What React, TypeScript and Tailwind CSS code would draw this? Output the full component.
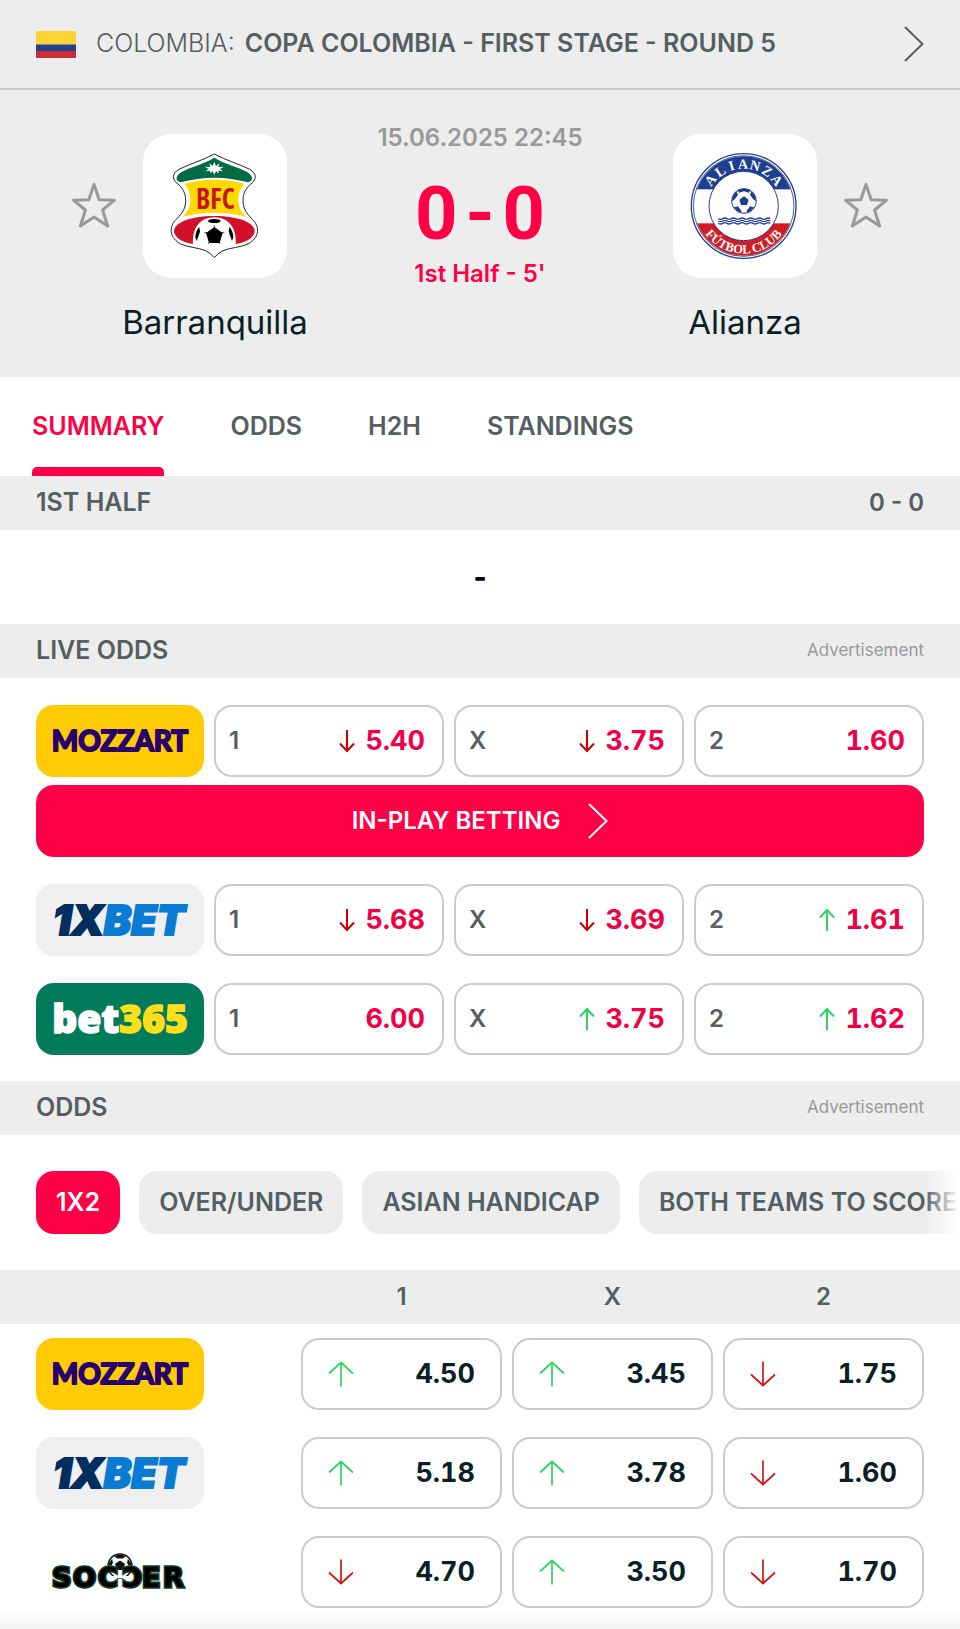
import type { ReactNode } from "react";

type Trend = "up" | "down" | null;
type Brand = "mozzart" | "onexbet" | "bet365" | "soccer";
type Odd = { value: string; trend: Trend };

const OUTCOMES = ["1", "X", "2"];

const LIVE_ODDS: { brand: Brand; odds: Odd[]; promoted?: boolean }[] = [
  {
    brand: "mozzart",
    promoted: true,
    odds: [
      { value: "5.40", trend: "down" },
      { value: "3.75", trend: "down" },
      { value: "1.60", trend: null },
    ],
  },
  {
    brand: "onexbet",
    odds: [
      { value: "5.68", trend: "down" },
      { value: "3.69", trend: "down" },
      { value: "1.61", trend: "up" },
    ],
  },
  {
    brand: "bet365",
    odds: [
      { value: "6.00", trend: null },
      { value: "3.75", trend: "up" },
      { value: "1.62", trend: "up" },
    ],
  },
];

const PREMATCH_ODDS: { brand: Brand; odds: Odd[] }[] = [
  {
    brand: "mozzart",
    odds: [
      { value: "4.50", trend: "up" },
      { value: "3.45", trend: "up" },
      { value: "1.75", trend: "down" },
    ],
  },
  {
    brand: "onexbet",
    odds: [
      { value: "5.18", trend: "up" },
      { value: "3.78", trend: "up" },
      { value: "1.60", trend: "down" },
    ],
  },
  {
    brand: "soccer",
    odds: [
      { value: "4.70", trend: "down" },
      { value: "3.50", trend: "up" },
      { value: "1.70", trend: "down" },
    ],
  },
];

function Chevron() {
  return (
    <svg className="h-[36px] w-[20px] shrink-0" viewBox="0 0 20 36" fill="none" stroke="currentColor" strokeWidth="2" aria-hidden="true">
      <path d="M1 1 L18.5 18 L1 35" />
    </svg>
  );
}

function Star() {
  return (
    <svg className="h-[46px] w-[46px]" viewBox="0 0 46 46" fill="none" stroke="#999999" strokeWidth="3" strokeLinejoin="round" aria-hidden="true">
      <path d="M23 2.5 L28.2 17.8 L43.5 18.2 L31.6 28 L36.6 44 L23 35 L9.4 44 L14.4 28 L2.5 18.2 L17.8 17.8 Z" />
    </svg>
  );
}

function SmallArrow({ trend }: { trend: Trend }) {
  if (!trend) return null;
  return (
    <svg className="h-[24px] w-[16px] shrink-0" viewBox="0 0 16 24" fill="none" stroke={trend === "up" ? "#2fd35f" : "#c80000"} strokeWidth="2" role="img" aria-label={trend}>
      <path d={trend === "up" ? "M8 23 V2 M1 9.5 L8 2 L15 9.5" : "M8 1 V22 M1 14.5 L8 22 L15 14.5"} />
    </svg>
  );
}

function WideArrow({ trend }: { trend: Trend }) {
  if (!trend) return null;
  return (
    <svg className="h-[28px] w-[26px] shrink-0" viewBox="0 0 26 28" fill="none" stroke={trend === "up" ? "#2fd35f" : "#d01818"} strokeWidth="1.7" role="img" aria-label={trend}>
      <path d={trend === "up" ? "M13 26.5 V2.5 M1 13.5 L13 2.5 L25 13.5" : "M13 1.5 V25.5 M1 14.5 L13 25.5 L25 14.5"} />
    </svg>
  );
}

function BarranquillaCrest() {
  return (
    <svg className="h-full w-full" viewBox="12 12 432 432" role="img" aria-label="Barranquilla crest">
      <path
        d="M226 72 C190 92 150 102 120 118 C98 130 98 150 118 163 C135 178 140 195 140 212 C140 240 125 255 108 272 C88 295 94 325 125 342 C150 353 175 352 200 362 Q216 370 226 383 Q236 370 252 362 C277 352 302 353 327 342 C358 325 364 295 344 272 C327 255 312 240 312 212 C312 195 317 178 334 163 C354 150 354 130 332 118 C302 102 262 92 226 72 Z"
        fill="#fff"
        stroke="#222"
        strokeWidth="3"
      />
      <path d="M226 83 C195 103 155 110 128 126 C109 138 108 152 124 157 Q175 143 226 143 Q277 143 328 157 C344 152 343 138 324 126 C297 110 257 103 226 83 Z" fill="#006b45" />
      <path d="M226 95 L231 108 L241 100 L238 111 L255 110 L243 117 L252 124 L238 122 L239 130 L231 124 L226 134 L221 124 L213 130 L214 122 L200 124 L209 117 L197 110 L214 111 L211 100 L221 108 Z" fill="#fff" />
      <path d="M136 161 Q226 138 316 161 C300 178 298 200 298 212 C299 235 308 245 320 260 Q226 236 132 260 C144 245 153 235 154 212 C154 200 152 178 136 161 Z" fill="#ffd900" />
      <text x="229" y="238" textAnchor="middle" fill="#c8141e" className="font-['Open_Sans_Condensed','Roboto_Condensed','Liberation_Sans_Narrow','Noto_Sans',sans-serif] text-[84px] font-bold">BFC</text>
      <path d="M165 343 C122 336 105 318 105 303 C105 280 150 258 226 258 C302 258 347 280 347 303 C347 318 330 336 287 343 Z" fill="#d2102a" />
      <path d="M162 346 C158 295 182 262 226 262 C270 262 294 295 290 346 Z" fill="#fff" />
      <ellipse cx="226" cy="273" rx="19" ry="6" />
      <path d="M226 291 L251 309 L242 339 L210 339 L201 309 Z M181 291 L183 305 L173 333 L169 322 Q170 301 181 291 Z M271 291 L269 305 L279 333 L283 322 Q282 301 271 291 Z" />
      <path d="M196 308 H256 M226 286 V294 M208 342 L212 335 M244 342 L240 335" stroke="#000" strokeWidth="2" />
    </svg>
  );
}

const ALIANZA_LETTERS = [
  { char: "A", angle: -52 },
  { char: "L", angle: -34 },
  { char: "I", angle: -17 },
  { char: "A", angle: -1 },
  { char: "N", angle: 16 },
  { char: "Z", angle: 34 },
  { char: "A", angle: 52 },
];

function AlianzaCrest() {
  return (
    <svg className="h-full w-full" viewBox="12 12 432 432" role="img" aria-label="Alianza crest">
      <defs>
        <clipPath id="alianza-ring">
          <circle cx="224" cy="228" r="149" />
        </clipPath>
        <path id="alianza-bottom" d="M81 228 A143 143 0 0 0 367 228" />
      </defs>
      <circle cx="224" cy="228" r="157" fill="#fff" stroke="#263f8c" strokeWidth="4" />
      <g clipPath="url(#alianza-ring)">
        <rect x="64" y="68" width="320" height="110" fill="#203e8f" />
        <rect x="64" y="280" width="320" height="110" fill="#d31d25" />
      </g>
      <circle cx="224" cy="228" r="151" fill="none" stroke="#263f8c" strokeWidth="2.5" />
      <circle cx="224" cy="228" r="104" fill="#fff" stroke="#263f8c" strokeWidth="3" />
      <g fill="#fff" textAnchor="middle" className="font-['Liberation_Serif',serif] text-[42px] font-bold">
        {ALIANZA_LETTERS.map(({ char, angle }) => (
          <text key={angle} x="224" y="116" transform={`rotate(${angle} 224 228)`}>
            {char}
          </text>
        ))}
      </g>
      <text fill="#fff" textAnchor="middle" className="font-['Liberation_Serif',serif] text-[38px] font-bold">
        <textPath href="#alianza-bottom" startOffset="50%">FÚTBOL CLUB</textPath>
      </text>
      <circle cx="225" cy="213" r="37" fill="#fff" stroke="#203e8f" strokeWidth="3" />
      <g fill="#203e8f">
        <path d="M225 199 L239 209 L234 225 L216 225 L211 209 Z" />
        <path d="M206 180 Q225 171 244 180 L240 188 L225 184 L210 188 Z" />
        <path d="M190 204 Q192 192 202 183 L207 194 L198 207 L190 214 Z" />
        <path d="M260 204 Q258 192 248 183 L243 194 L252 207 L260 214 Z" />
        <path d="M195 232 L207 229 L217 242 L215 248 Q202 244 195 232 Z" />
        <path d="M255 232 L243 229 L233 242 L235 248 Q248 244 255 232 Z" />
      </g>
      <path
        d="M148 266 q6.5 4 13 0 t13 0 t13 0 t13 0 t13 0 t13 0 t13 0 t13 0 t13 0 t13 0 t13 0 t13 0 M148 273 q6.5 4 13 0 t13 0 t13 0 t13 0 t13 0 t13 0 t13 0 t13 0 t13 0 t13 0 t13 0 t13 0 M148 280 q6.5 4 13 0 t13 0 t13 0 t13 0 t13 0 t13 0 t13 0 t13 0 t13 0 t13 0 t13 0 t13 0"
        fill="none"
        stroke="#263f8c"
        strokeWidth="4"
      />
    </svg>
  );
}

const BRANDS: Record<Brand, { name: string; tile: string; art: ReactNode }> = {
  mozzart: {
    name: "Mozzart",
    tile: "bg-[#ffcb05]",
    art: (
      <text x="84" y="46" textAnchor="middle" fill="#28006e" stroke="#28006e" strokeWidth="2" strokeLinejoin="round" className="font-['Lato',sans-serif] text-[28px] font-bold">
        MOZZART
      </text>
    ),
  },
  onexbet: {
    name: "1xBet",
    tile: "bg-[#efefef]",
    art: (
      <text x="83" y="51" textAnchor="middle" strokeWidth="2" className="font-['Inter',sans-serif] text-[41px] font-black italic">
        <tspan fill="#002f5f" stroke="#002f5f">1X</tspan>
        <tspan fill="#0a7bd2" stroke="#0a7bd2">BET</tspan>
      </text>
    ),
  },
  bet365: {
    name: "bet365",
    tile: "bg-[#027b5b]",
    art: (
      <text x="84" y="50" textAnchor="middle" strokeWidth="1.5" className="font-['Noto_Sans','Open_Sans',sans-serif] text-[39px] font-black">
        <tspan fill="#ffffff" stroke="#ffffff">bet</tspan>
        <tspan fill="#ffdf1b" stroke="#ffdf1b">365</tspan>
      </text>
    ),
  },
  soccer: {
    name: "Soccer",
    tile: "bg-white",
    art: (
      <>
        <circle cx="84" cy="30" r="12" fill="#fff" stroke="#111" strokeWidth="1.5" />
        <path d="M84 24.5 L89 28 L87 34 L81 34 L79 28 Z M78 20 L84 18.5 L90 20 L87 22.5 L81 22.5 Z M73 27 L76 23 L77 27 L73.5 32 Z M95 27 L92 23 L91 27 L94.5 32 Z" fill="#111" />
        <g fill="#000" stroke="#143825" strokeWidth="3.5" paintOrder="stroke" className="font-['DejaVu_Sans',sans-serif] text-[27px] font-bold">
          <text x="16" y="51">S</text>
          <text x="37" y="51">O</text>
          <text x="62" y="51">C</text>
          <text x="-106" y="-31" transform="rotate(180)">C</text>
          <text x="106" y="51">E</text>
          <text x="127" y="51">R</text>
        </g>
        <path d="M75 41 H93" stroke="#fff" strokeWidth="2" />
      </>
    ),
  },
};

function BrandLink({ brand }: { brand: Brand }) {
  const { name, tile, art } = BRANDS[brand];
  return (
    <a href={`#${brand}`} aria-label={name} className={`block h-[72px] w-[168px] shrink-0 overflow-hidden rounded-[18px] ${tile}`}>
      <svg className="h-full w-full" viewBox="0 0 168 72" aria-hidden="true">
        {art}
      </svg>
    </a>
  );
}

function SectionBar({ title, children }: { title: string; children?: ReactNode }) {
  return (
    <div className="flex h-[54px] items-center justify-between bg-[#ededed] px-9">
      <h2 className="text-[25px] font-semibold">{title}</h2>
      {children}
    </div>
  );
}

function Team({ name, crest, away }: { name: string; crest: ReactNode; away?: boolean }) {
  return (
    <div className={`flex items-start gap-[26px] ${away ? "flex-row-reverse" : ""}`}>
      <button type="button" aria-label={`Follow ${name}`} className="mt-12">
        <Star />
      </button>
      <div className="flex w-[144px] flex-col items-center">
        <div className="h-[144px] w-[144px] overflow-hidden rounded-[28px] bg-white">{crest}</div>
        <a href={`#${name.toLowerCase()}`} className="mt-6 text-[33px] leading-10 whitespace-nowrap text-[#0b1f26]">
          {name}
        </a>
      </div>
    </div>
  );
}

export default function App() {
  return (
    <div className="relative min-h-screen overflow-hidden bg-white font-['Inter',sans-serif] text-[#555e61]">
      <a href="#tournament" className="flex h-[90px] items-center border-b-2 border-[#cccccc] bg-[#ededed] px-9">
        <svg className="h-[27px] w-[40px]" viewBox="0 0 40 27" role="img" aria-label="Colombia">
          <rect width="40" height="27" fill="#cc2f35" />
          <rect width="40" height="20" fill="#233f91" />
          <rect width="40" height="13.5" fill="#fcd535" />
        </svg>
        <span className="ml-5 text-[25px] font-light">COLOMBIA:</span>
        <span className="ml-[10px] text-[25px] font-semibold">COPA COLOMBIA - FIRST STAGE - ROUND 5</span>
        <span className="ml-auto">
          <Chevron />
        </span>
      </a>

      <header className="flex items-start justify-between bg-[#ededed] px-[71px] pt-11 pb-[35px]">
        <Team name="Barranquilla" crest={<BarranquillaCrest />} />
        <div className="flex flex-col items-center text-2xl font-semibold">
          <time className="-mt-3 leading-8 text-[#999999]">15.06.2025 22:45</time>
          <div className="mt-4 flex items-center gap-2 font-['Roboto',sans-serif] text-[74px] leading-[88px] font-bold text-[#ff0046]">
            <span>0</span>
            <span>-</span>
            <span>0</span>
          </div>
          <p className="leading-8 text-[#ff0046]">1st Half - 5'</p>
        </div>
        <Team name="Alianza" crest={<AlianzaCrest />} away />
      </header>

      <nav className="flex h-[99px] gap-[66px] px-8 text-[25px] font-semibold">
        <a href="#summary" aria-current="page" className="flex flex-col text-[#ff0046]">
          <span className="flex flex-1 items-center pt-[10px]">SUMMARY</span>
          <span className="h-[9px] rounded-t-[5px] bg-[#ff0046]" />
        </a>
        <a href="#odds" className="flex items-center">ODDS</a>
        <a href="#h2h" className="flex items-center">H2H</a>
        <a href="#standings" className="flex items-center">STANDINGS</a>
      </nav>

      <SectionBar title="1ST HALF">
        <span className="text-2xl font-semibold">0 - 0</span>
      </SectionBar>
      <p className="flex h-[94px] items-center justify-center text-[28px] font-extrabold text-black">-</p>

      <SectionBar title="LIVE ODDS">
        <span className="text-[17px] text-[#999999]">Advertisement</span>
      </SectionBar>
      <div className="flex flex-col gap-[27px] px-9 pt-[27px] pb-[26px]">
        {LIVE_ODDS.map(({ brand, odds, promoted }) => (
          <div key={brand} className="flex flex-col gap-2">
            <div className="flex gap-[10px]">
              <BrandLink brand={brand} />
              {odds.map(({ value, trend }, i) => (
                <button key={OUTCOMES[i]} type="button" className="flex h-[72px] flex-1 items-center rounded-[18px] border-2 border-[#cacccc] pr-[17px] pl-[13px]">
                  <span className="mr-auto text-2xl font-semibold">{OUTCOMES[i]}</span>
                  <SmallArrow trend={trend} />
                  <span className="ml-[10px] text-[27px] font-bold text-[#f00046] tabular-nums">{value}</span>
                </button>
              ))}
            </div>
            {promoted && (
              <button type="button" className="flex h-[72px] items-center justify-center gap-7 rounded-[18px] bg-[#ff0046] text-2xl font-semibold text-white">
                IN-PLAY BETTING
                <Chevron />
              </button>
            )}
          </div>
        ))}
      </div>

      <SectionBar title="ODDS">
        <span className="text-[17px] text-[#999999]">Advertisement</span>
      </SectionBar>
      <div className="relative">
        <div className="flex gap-[19px] overflow-hidden py-9 pl-9 text-[25px] font-semibold whitespace-nowrap">
          <button type="button" className="h-[63px] shrink-0 rounded-[18px] bg-[#ff0046] px-5 text-white">1X2</button>
          <button type="button" className="h-[63px] shrink-0 rounded-[18px] bg-[#ededed] px-5">OVER/UNDER</button>
          <button type="button" className="h-[63px] shrink-0 rounded-[18px] bg-[#ededed] px-5">ASIAN HANDICAP</button>
          <button type="button" className="h-[63px] shrink-0 rounded-[18px] bg-[#ededed] px-5">BOTH TEAMS TO SCORE</button>
        </div>
        <div className="pointer-events-none absolute inset-y-0 right-0 w-9 bg-linear-to-r from-white/0 to-white" />
      </div>

      <table className="block">
        <thead className="block bg-[#ededed]">
          <tr className="grid h-[54px] grid-cols-[255px_1fr_1fr_1fr] items-center gap-x-[10px] px-9 text-2xl font-semibold">
            <td />
            {OUTCOMES.map((o) => (
              <th key={o} scope="col" className="font-semibold">{o}</th>
            ))}
          </tr>
        </thead>
        <tbody className="flex flex-col gap-[27px] px-9 pt-[14px] pb-[22px]">
          {PREMATCH_ODDS.map(({ brand, odds }) => (
            <tr key={brand} className="grid grid-cols-[255px_1fr_1fr_1fr] gap-x-[10px]">
              <th scope="row">
                <BrandLink brand={brand} />
              </th>
              {odds.map(({ value, trend }, i) => (
                <td key={OUTCOMES[i]}>
                  <button type="button" className="flex h-[72px] w-full items-center justify-between rounded-[18px] border-2 border-[#cacccc] px-[25px]">
                    <WideArrow trend={trend} />
                    <span className="text-[27px] font-bold text-[#0b1f26] tabular-nums">{value}</span>
                  </button>
                </td>
              ))}
            </tr>
          ))}
        </tbody>
      </table>
      <div className="pointer-events-none absolute inset-x-0 bottom-0 h-5 bg-linear-to-b from-transparent to-black/5" />
    </div>
  );
}
